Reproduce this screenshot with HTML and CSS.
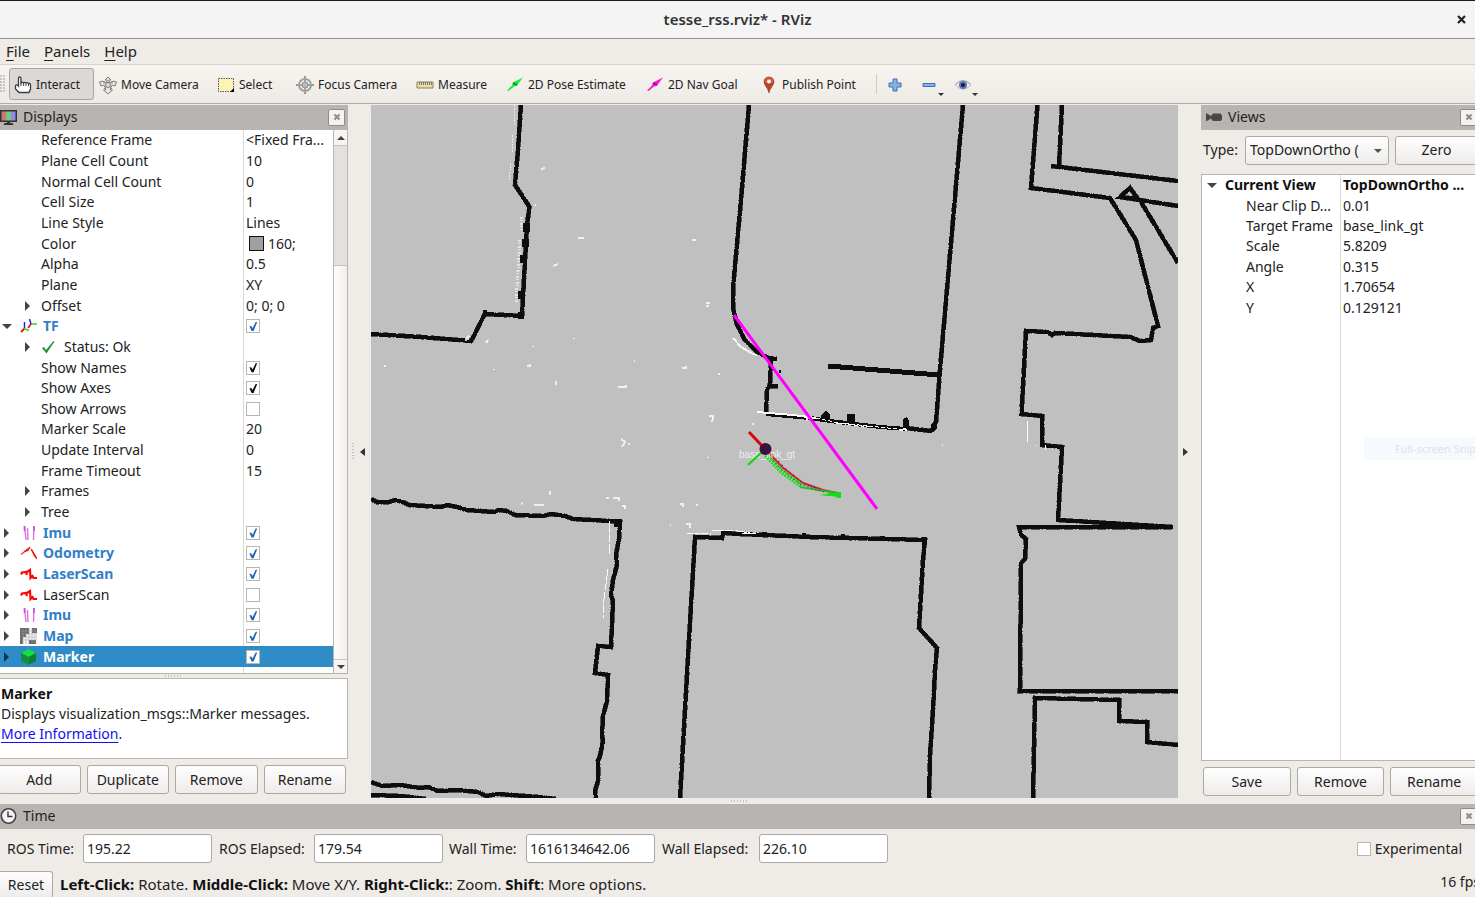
FILE: index.html
```html
<!DOCTYPE html>
<html lang="en">
<head>
<meta charset="utf-8">
<title>tesse_rss.rviz* - RViz</title>
<link rel="stylesheet" href="styles.css">
</head>
<body>
<svg class="defs" aria-hidden="true">
  <symbol id="i-imu" viewBox="0 0 17 16"><path d="M4.500 1l1.500 14M7.500 3l.5 12M14 1l-.5 14" stroke="#e070e0" stroke-width="1.400" fill="none"/><path d="M4.500 1v5M14 1v5" stroke="#c850d8" stroke-width="1.600"/></symbol>
  <symbol id="i-odom" viewBox="0 0 17 16"><path d="M1 9.500l9-7M11 4l6 10" stroke="#f04020" stroke-width="1.500" fill="none"/><path d="M4 6.500l6-4.500-2 4zM12 5l2 6 3 3z" fill="#e82010" stroke="#e82010" stroke-width=".6"/></symbol>
  <symbol id="i-laser" viewBox="0 0 17 16"><path d="M1 8.500l1-2 4-.5 1 3M7 6l3-2 .5 8 2-2 1 2h3.500" stroke="#f80808" stroke-width="2.200" fill="none"/></symbol>
  <symbol id="i-close" viewBox="0 0 8 8"><path d="M1.500 1.500l5 5M6.500 1.500l-5 5" stroke="#8f8f8f" stroke-width="2.200"/></symbol>
</svg>

<header class="titlebar">
  <h1>tesse_rss.rviz* - RViz</h1>
  <button class="win-close" aria-label="Close window"><svg width="9" height="9" viewBox="0 0 9 9"><path d="M1 1l7 7M8 1l-7 7" stroke="#222" stroke-width="2.200"/></svg></button>
</header>

<div class="shell">
<nav class="menubar">
  <button><u>F</u>ile</button><button><u>P</u>anels</button><button><u>H</u>elp</button>
</nav>

<div class="toolbar" role="toolbar">
  <span class="grip"></span>
  <button class="tool active"><svg width="18" height="18" viewBox="0 0 18 18"><path d="M4.500 10V2.500Q4.500 1 5.700 1T7 2.500V7Q8.500 5.500 9.500 7 11 5.500 12 7.200 14 6 14.500 7.500 16.500 7 16.500 9v4l-1.500 3.500H5L1.500 13V9.500Q3 8 4.500 10z" fill="#fff" stroke="#3c3c3c" stroke-width="1.300"/><path d="M7 7v3M9.600 7v3M12 7.500V10M14.500 8v2" stroke="#444"/></svg><span>Interact</span></button>
  <button class="tool"><svg width="18" height="18" viewBox="0 0 18 18"><path d="M9 1l3 3h-2v2l3 1 1-2 3.500 1-1.500 4-2.500-1-2 3v2h2l-4.500 4-4.500-4h2v-2l-2-3-2.500 1L.5 6 4 5l1 2 3-1V4H6z" fill="#e4e4e2" stroke="#808080"/><path d="M5 5l8 8M13 5l-8 8" stroke="#909090"/><circle cx="9" cy="9" r="2.500" fill="#ddd" stroke="#777"/></svg><span>Move Camera</span></button>
  <button class="tool"><svg width="18" height="18" viewBox="0 0 18 18"><path d="M1.500 2.500h15v13h-15z" fill="#fdf3b4" stroke="#555" stroke-dasharray="1.500 1"/><path d="M17 12v4h-4z" fill="#000"/></svg><span>Select</span></button>
  <button class="tool"><svg width="18" height="18" viewBox="0 0 18 18"><circle cx="9" cy="9" r="6" fill="none" stroke="#a0a0a0" stroke-width="2"/><circle cx="9" cy="9" r="3" fill="#bbb" stroke="#8c8c8c"/><path d="M9 0v6M9 12v6M0 9h6M12 9h6" stroke="#909090" stroke-width="2"/><path d="M9 1v5M9 12v5M1 9h5M12 9h5" stroke="#ccc" stroke-width=".6"/></svg><span>Focus Camera</span></button>
  <button class="tool"><svg width="18" height="18" viewBox="0 0 18 18"><path d="M1 6h16v6H1z" fill="#eadf9c" stroke="#888060"/><path d="M3.500 6v3M5.500 6v3M7.500 6v3M9.500 6v3M11.500 6v3M13.500 6v3M15.500 6v3" stroke="#777"/></svg><span>Measure</span></button>
  <button class="tool"><svg width="18" height="18" viewBox="0 0 18 18"><path d="M1 14.500l5-5 1-3 10-5-6 8-3 1-5.500 4.500z" fill="#18ee38"/><path d="M7 7l4 2" stroke="#0a9c20" stroke-width="2"/></svg><span>2D Pose Estimate</span></button>
  <button class="tool"><svg width="18" height="18" viewBox="0 0 18 18"><path d="M1 14.500l5-5 1-3 10-5-6 8-3 1-5.500 4.500z" fill="#f51ad2"/><path d="M7 7l4 2" stroke="#b00aa0" stroke-width="2"/></svg><span>2D Nav Goal</span></button>
  <button class="tool"><svg width="18" height="18" viewBox="0 0 18 18"><path d="M9 17C8 12 4 9 4 5.800 4 3 6.200 1 9 1s5 2 5 4.800C14 9 10 12 9 17z" fill="#b84428" stroke="#8c3820" stroke-width=".6"/><path d="M4.500 5Q5 1.500 9 1.500T13.500 5L12 7H6z" fill="#e05840"/><circle cx="9" cy="5.500" r="1.900" fill="#fff"/></svg><span>Publish Point</span></button>
  <span class="sep"></span>
  <button class="tool mini" aria-label="Add tool"><svg width="14" height="14" viewBox="0 0 14 14"><path d="M5 1h4v4h4v4H9v4H5V9H1V5h4z" fill="#86b2e4" stroke="#3f6fae"/></svg></button>
  <button class="tool mini drop" aria-label="Remove tool"><svg width="14" height="14" viewBox="0 0 14 14"><path d="M1 5.500h12v3H1z" fill="#86b2e4" stroke="#3f6fae"/></svg></button>
  <button class="tool mini drop" aria-label="Visibility"><svg width="18" height="14" viewBox="0 0 18 14"><path d="M1 7Q9-1.500 17 7 9 15.500 1 7z" fill="#e9e9ee" stroke="#bcbcc4"/><circle cx="9" cy="7" r="4" fill="#5a74b8"/><circle cx="9" cy="7" r="2" fill="#141c3c"/><path d="M1.500 6Q9-1 16.500 6" stroke="#a4a4ac" fill="none"/></svg></button>
</div>

<main class="work">
  <section class="dock dock-left">
    <header class="dock-head">
      <svg width="18" height="18" viewBox="0 0 18 18"><path d="M0 2h17v12H0z" fill="#333"/><path d="M1.500 3.500H6v9H1.500z" fill="#c87878"/><path d="M6 3.500h5v9H6z" fill="#78c878"/><path d="M11 3.500h4.500v9H11z" fill="#8c8ce8"/><path d="M7 13h3v2h2.500l1 2h-10l1-2H7z" fill="#333"/></svg>
      <h2>Displays</h2>
      <button class="dock-close" aria-label="Close Displays"><svg width="8" height="8"><use href="#i-close"/></svg></button>
    </header>
    <div class="tree-box">
      <table class="tree tree-displays">
        <tbody>
          <tr class="l2"><th scope="row"><span>Reference Frame</span></th><td><span>&lt;Fixed Fra...</span></td></tr>
          <tr class="l2"><th scope="row"><span>Plane Cell Count</span></th><td>10</td></tr>
          <tr class="l2"><th scope="row"><span>Normal Cell Count</span></th><td>0</td></tr>
          <tr class="l2"><th scope="row"><span>Cell Size</span></th><td>1</td></tr>
          <tr class="l2"><th scope="row"><span>Line Style</span></th><td>Lines</td></tr>
          <tr class="l2"><th scope="row"><span>Color</span></th><td><i class="swatch"></i>160;</td></tr>
          <tr class="l2"><th scope="row"><span>Alpha</span></th><td>0.5</td></tr>
          <tr class="l2"><th scope="row"><span>Plane</span></th><td>XY</td></tr>
          <tr class="l2"><th scope="row"><i class="arrow"></i><span>Offset</span></th><td>0; 0; 0</td></tr>
          <tr class="l1 on"><th scope="row"><i class="arrow open"></i><svg width="17" height="16" viewBox="0 0 17 16"><path d="M1 14l3.500-3.500M8 10l3-4" stroke="#f01010" stroke-width="1.800"/><path d="M4 10.500l5 2M11 6h6" stroke="#20e020" stroke-width="1.500"/><path d="M4.500 10V4M11 6L9.500 1" stroke="#2020f0" stroke-width="1.500"/></svg><label for="c1">TF</label></th><td><input type="checkbox" id="c1" checked></td></tr>
          <tr class="l2"><th scope="row"><i class="arrow"></i><svg class="status" width="14" height="14" viewBox="0 0 14 14"><path d="M1 8l2-1 2 3 7.500-9L13.500 1.500 5.500 13.500z" fill="#2c8a30"/></svg><span>Status: Ok</span></th><td></td></tr>
          <tr class="l2"><th scope="row"><label for="c2">Show Names</label></th><td><input type="checkbox" id="c2" checked></td></tr>
          <tr class="l2"><th scope="row"><label for="c3">Show Axes</label></th><td><input type="checkbox" id="c3" checked></td></tr>
          <tr class="l2"><th scope="row"><label for="c4">Show Arrows</label></th><td><input type="checkbox" id="c4"></td></tr>
          <tr class="l2"><th scope="row"><span>Marker Scale</span></th><td>20</td></tr>
          <tr class="l2"><th scope="row"><span>Update Interval</span></th><td>0</td></tr>
          <tr class="l2"><th scope="row"><span>Frame Timeout</span></th><td>15</td></tr>
          <tr class="l2"><th scope="row"><i class="arrow"></i><span>Frames</span></th><td></td></tr>
          <tr class="l2"><th scope="row"><i class="arrow"></i><span>Tree</span></th><td></td></tr>
          <tr class="l1 on"><th scope="row"><i class="arrow"></i><svg width="17" height="16"><use href="#i-imu"/></svg><label for="c5">Imu</label></th><td><input type="checkbox" id="c5" checked></td></tr>
          <tr class="l1 on"><th scope="row"><i class="arrow"></i><svg width="17" height="16"><use href="#i-odom"/></svg><label for="c6">Odometry</label></th><td><input type="checkbox" id="c6" checked></td></tr>
          <tr class="l1 on"><th scope="row"><i class="arrow"></i><svg width="17" height="16"><use href="#i-laser"/></svg><label for="c7">LaserScan</label></th><td><input type="checkbox" id="c7" checked></td></tr>
          <tr class="l1"><th scope="row"><i class="arrow"></i><svg width="17" height="16"><use href="#i-laser"/></svg><label for="c8">LaserScan</label></th><td><input type="checkbox" id="c8"></td></tr>
          <tr class="l1 on"><th scope="row"><i class="arrow"></i><svg width="17" height="16"><use href="#i-imu"/></svg><label for="c9">Imu</label></th><td><input type="checkbox" id="c9" checked></td></tr>
          <tr class="l1 on"><th scope="row"><i class="arrow"></i><svg width="17" height="16" viewBox="0 0 17 16"><path d="M0 0h17v16H0z" fill="#f2f2f2"/><path d="M0 0h9v6H6v3H3v7H0zM12 0h5v5h-5zM9 12h7v4H9z" fill="#666"/><path d="M0 3h17M0 6h17M0 9h17M0 12h17M3 0v16M6 0v16M9 0v16M12 0v16M15 0v16" stroke="#aaa" stroke-width=".5"/></svg><label for="c10">Map</label></th><td><input type="checkbox" id="c10" checked></td></tr>
          <tr class="l1 on selected"><th scope="row"><i class="arrow"></i><svg width="17" height="16" viewBox="0 0 17 16"><path d="M8.500 0L16 4l-7.500 4L1 4z" fill="#10e040"/><path d="M1 4l7.500 4v8L1 12z" fill="#109038"/><path d="M16 4L8.500 8v8l7.500-4z" fill="#108030"/></svg><label for="c11">Marker</label></th><td><input type="checkbox" id="c11" checked></td></tr>
        </tbody>
      </table>
      <div class="scrollbar" aria-hidden="true">
        <span class="sb-btn up"></span><span class="sb-track"></span><span class="sb-thumb"></span><span class="sb-btn down"></span>
      </div>
    </div>
    <div class="split-h dots-h"></div>
    <div class="desc">
      <b>Marker</b>
      <p>Displays visualization_msgs::Marker messages.</p>
      <p><a href="#more">More Information</a>.</p>
    </div>
    <div class="btn-row">
      <button class="btn">Add</button><button class="btn">Duplicate</button><button class="btn">Remove</button><button class="btn">Rename</button>
    </div>
  </section>

  <div class="side-handle"><span class="dots-v"></span><button class="fold" aria-label="Hide left panel"></button></div>

  <div class="viewport">
    <svg class="map" viewBox="371 105 807 693" preserveAspectRatio="xMidYMid slice" role="img" aria-label="Occupancy map">
      <defs>
        <g id="walls">
          <path d="M521 105l-3 45-3 35 14.500 22-2.500 18-5 91-37-2-14 27-50-4-50-3"/>
          <path d="M749 105l-8 95-8 88v20l4 17 8 15 11 11 12 7 9 1M771 359l-1 25-3 6-1 24M769 386h9"/>
          <path d="M963 105l-12 138-11 127-4 52-5 9-25-3M828 366l111 9"/>
          <path d="M1037.500 105l-6.500 83 79 10 26 42 22 86-5 2-2 12-11 1-10-4-75-4-3 2-4-3-22-1-4.500 83 20.500 2v29l20 2-4 73 115 7"/>
          <path d="M1062 105l-3 61M1051 166l127 15M1120 197l10-9 8 11zl58 9M1141 202l37 61"/>
          <path d="M1172 527h-153l2 8 5 4-1 20-4 4-1 128h158M1033 798l2-100 84 2v21l28 1v20l10 1 21 2"/>
          <path d="M680 798l8-140 7-121 27 1 1-5 17 1 70 3 115 3-2 20-4 68 18 20-2 22-2 40-3 45-1 43"/>
          <path d="M371 499l6 3h12l6-2 8 2 6 3 32 2 6-2 10 2 10 3 27 2 5-2 8 1 8 4 28 1 8-2 14 2 8 3 37 2 10 1-1 17-3 16 1 10-4 15-2 15 2 6-2 46-13-1-3 27 13 2-1 26-4 15-1 20 1 5-3 15-2 5v20l-3 10 1 8"/>
          <path d="M371 782l11 4 18-1 20 3 8-1 10 4 20-1 20 2 8 4 12-2 40 3 18 2M371 795l30 1 25 3"/>
        </g>
      </defs>
      <path d="M371 105h807v693H371z" fill="#c0c0c0"/>
      <use href="#walls" class="wall-halo"/>
      <use href="#walls" class="wall"/>
      <path class="wall-thin" d="M766 414l44 4 20 3 50 6 26 2"/>
      <path class="wall-thick" d="M828 366l111 9"/>
      <path class="wall-fill" d="M523 223h7v9h-7zM522 239h7v8h-7zM520 255h7v8h-7zM518 291h7v8h-7zM518 312h6v7h-6zM483 310h4v6h-4zM821 415l5-4 4 4v5h-9zM847 414h8v9h-8zM903 419l4-2 2 4v8h-6zM931 424l6-5v9l-4 4zM779 370h2v3h-2zM762 532h5v3h-5zM802 533h4v3h-4zM841 534h4v4h-4zM880 536h5v5h-5zM922 537h5v8h-5zM614 519h8v8h-8z"/>
      <g class="scan">
        <path d="M515 105l-1 20M513 135l-1 18M511 163l-2 18" stroke-dasharray="2 1" opacity=".7"/>
        <path d="M522 217l-1 13M520 240l-4 62" stroke-width="3" stroke-dasharray="2 1 1 2" opacity=".6"/>
        <path d="M733 338l8 9 12 7 4 1" stroke-width="2" opacity=".9"/>
        <path d="M757 412l36 3 23 3M806 420l4-3M900 430l6-1M904 429l3 1" stroke-width="2"/>
        <path d="M816 418l23 5 30 3 37 4M836 423l34 4" stroke-dasharray="4 2"/>
        <path d="M687 533l24 1M712 530h20l24 4-14-1M610 521l-1 34M608 569l-4 30-1 19" stroke-dasharray="12 1 8 2"/>
        <path d="M1028 421l-1 22M1045 445v5M1036 445v1"/>
        <path d="M541 169l4-1M535 205l1 1M578 238h6M692 240h4M553 266l5-2M706 303h4M706 306h3M574 338v1M533 346v1M486 343l2-3M469 339l-4 1M465 340l4-4M384 366h2M494 369v1M527 366h3v-2M556 381v4M618 387h8v-2M682 368h4v-2M718 374h2M634 361h1M709 416h4v4M711 421h2M621 439l4 3-3 5M629 443v2M752 424h2M942 445h1M550 491v4M606 498h3M613 498h6v3M622 506h3v3M680 504h3v3M696 505h2M670 525h1M686 524h4v4M521 504l2-1M534 505h10M708 457v1" stroke-width="2" opacity=".8"/>
      </g>
      <g class="axes">
        <path d="M766 450l16 17 21 16 20 7 18 4" stroke="#e02020" stroke-width="2" fill="none"/>
        <path d="M768 450l14 15 17 16 22 9 18 3" stroke="#2828d0" stroke-width="1" stroke-dasharray="2 3" fill="none"/>
        <path d="M766 455l16 17 20 14" stroke="#20e020" stroke-width="5" stroke-dasharray="2 1" fill="none"/>
        <path d="M800 487l24 4 14 2" stroke="#30b830" stroke-width="2" fill="none"/>
        <path d="M819 495l22-3v5zM828 493h13v5h-3z" fill="#10e010"/>
        <path d="M770 457l10 11 20 16 24 8" stroke="#247024" stroke-width="1" stroke-dasharray="2 2" fill="none"/>
        <text x="739" y="458">base_link_gt</text>
        <path d="M765 449l-16-17" stroke="#d80808" stroke-width="3"/>
        <path d="M763 451l-15 14" stroke="#08d808" stroke-width="2"/>
        <circle cx="765.500" cy="449" r="6" fill="#3c1040"/>
        <path d="M734 315L877 509" stroke="#ff00ff" stroke-width="3"/>
      </g>
    </svg>
  </div>

  <div class="side-handle right"><button class="fold" aria-label="Hide right panel"></button></div>

  <section class="dock dock-right">
    <header class="dock-head">
      <svg width="18" height="18" viewBox="0 0 18 18"><path d="M1 5l5 3 2-2.500h7.500l1.500 2v4l-1.500 1.500H8L6 10.500l-5 3z" fill="#484848"/></svg>
      <h2>Views</h2>
      <button class="dock-close" aria-label="Close Views"><svg width="8" height="8"><use href="#i-close"/></svg></button>
    </header>
    <div class="type-row">
      <label for="type">Type:</label>
      <div class="select-wrap"><select id="type"><option>TopDownOrtho (</option></select></div>
      <button class="btn">Zero</button>
    </div>
    <div class="tree-box views-box">
      <table class="tree tree-views">
        <tbody>
          <tr class="root"><th scope="row"><i class="arrow open"></i><span>Current View</span></th><td><span>TopDownOrtho ...</span></td></tr>
          <tr><th scope="row"><span>Near Clip D...</span></th><td>0.01</td></tr>
          <tr><th scope="row"><span>Target Frame</span></th><td>base_link_gt</td></tr>
          <tr><th scope="row"><span>Scale</span></th><td>5.8209</td></tr>
          <tr><th scope="row"><span>Angle</span></th><td>0.315</td></tr>
          <tr><th scope="row"><span>X</span></th><td>1.70654</td></tr>
          <tr><th scope="row"><span>Y</span></th><td>0.129121</td></tr>
        </tbody>
      </table>
      <div class="snip">Full-screen Snip</div>
    </div>
    <div class="btn-row">
      <button class="btn">Save</button><button class="btn">Remove</button><button class="btn">Rename</button>
    </div>
  </section>
</main>

<div class="split-main dots-h"></div>

<section class="time">
  <header class="dock-head">
    <svg width="18" height="18" viewBox="0 0 18 18"><circle cx="8.500" cy="9" r="7.200" fill="#f4f4f4" stroke="#444" stroke-width="1.600"/><path d="M8 4.500v5h4.500" fill="none" stroke="#333" stroke-width="1.400"/></svg>
    <h2>Time</h2>
    <button class="dock-close" aria-label="Close Time"><svg width="8" height="8"><use href="#i-close"/></svg></button>
  </header>
  <div class="time-row">
    <label for="t1">ROS Time:</label><input type="text" id="t1" value="195.22">
    <label for="t2">ROS Elapsed:</label><input type="text" id="t2" value="179.54">
    <label for="t3">Wall Time:</label><input type="text" id="t3" value="1616134642.06">
    <label for="t4">Wall Elapsed:</label><input type="text" id="t4" value="226.10">
    <span class="exp"><input type="checkbox" id="exp"><label for="exp">Experimental</label></span>
  </div>
</section>

<footer class="status-bar">
  <button class="btn">Reset</button>
  <p><b>Left-Click:</b> Rotate. <b>Middle-Click:</b> Move X/Y. <b>Right-Click:</b>: Zoom. <b>Shift</b>: More options.</p>
  <span class="fps">16 fps</span>
</footer>
</div>
</body>
</html>
```
FILE: styles.css
```css
* { box-sizing: border-box; }
html, body { height: 100%; }
body {
  margin: 0;
  overflow: hidden;
  display: flex;
  flex-direction: column;
  background: #efebe7;
  color: #222;
  font: 14px/20px "Noto Sans", "Open Sans", sans-serif;
}
button, input, select { font: inherit; color: inherit; margin: 0; }
button { border: 0; background: none; padding: 0; }
h1, h2, p { margin: 0; font-size: inherit; }
.defs { position: absolute; width: 0; height: 0; }

.titlebar {
  position: relative;
  flex: none;
  height: 39px;
  display: flex;
  align-items: center;
  justify-content: center;
  padding-bottom: 2px;
  background: #f4f4f4;
  border-top: 1px solid #1c1a1e;
  border-bottom: 1px solid #92908c;
}
.titlebar h1 { font-size: 15px; font-weight: 600; color: #333; }
.win-close { position: absolute; right: 9px; top: 14px; line-height: 0; }

/* The shell runs slightly past the right edge of the window. */
.shell { flex: 1; min-height: 0; width: calc(100% + 5px); display: flex; flex-direction: column; }

.menubar {
  flex: none;
  display: flex;
  gap: 14px;
  height: 26px;
  padding: 0 6px 2px;
  align-items: center;
  border-bottom: 1px solid #d6d2ce;
  font-size: 15px;
}
.menubar u { text-underline-offset: 3px; }

.toolbar {
  flex: none;
  height: 39px;
  display: grid;
  grid-template-columns: 9px 86px 118px 79px 120px 90px 140px 114px 120px 8px 34px 32px 34px;
  align-items: center;
  background: linear-gradient(#f7f4f0, #eeeae6);
  border-bottom: 1px solid #aeaaa6;
  font-size: 12px;
}
.tool { display: flex; align-items: center; gap: 4px; height: 32px; padding: 1px 4px 0; white-space: nowrap; }
.tool.active { width: 85px; border: 1px solid #a8a5a2; border-radius: 3px; background: #dcd8d5; }
.grip { width: 5px; height: 18px; background: radial-gradient(circle at 1px 1px, #c8c4c0 1px, transparent 1px) 0 0 / 3px 3px; }
.sep { width: 1px; height: 20px; background: #cfccc8; }
.tool.mini { position: relative; }
.drop::after {
  content: "";
  position: absolute;
  right: 6px;
  bottom: 4px;
  border: 3px solid transparent;
  border-top-color: #333;
  border-bottom: 0;
}

.work { flex: 1; min-height: 0; display: flex; padding-top: 1px; }
.dock { flex: none; display: flex; flex-direction: column; min-height: 0; }
.dock-left { width: 348px; }
.dock-right { width: 279px; }
.dock-head {
  flex: none;
  display: flex;
  align-items: center;
  gap: 5px;
  height: 25px;
  padding: 0 3px 1px 0;
  background: #b8b4b1;
}
.dock-right .dock-head { padding-left: 4px; }
.dock-head h2 { flex: 1; font-weight: 400; }
.dock-close {
  display: flex;
  align-items: center;
  justify-content: center;
  width: 17px;
  height: 17px;
  background: #f4f3f2;
  border: 1px solid #8e8b88;
  border-radius: 2px;
}

.tree-box { flex: 1; min-height: 0; display: flex; background: #fff; border-bottom: 1px solid #b4b0ad; overflow: hidden; }
.tree { display: block; flex: 1; min-width: 0; }
.tree tbody { display: grid; }
.tree tr { display: grid; grid-template-columns: subgrid; grid-column: 1 / -1; align-items: center; }
.tree th, .tree td { display: flex; align-items: center; padding: 0; height: 100%; font-weight: 400; white-space: nowrap; }
.tree th { position: relative; border-right: 1px solid #d8d8d8; }
.tree-displays { background: linear-gradient(#d8d8d8, #d8d8d8) 243px 0 / 1px 100% no-repeat; }
.tree-displays tbody { height: calc(100% - 6px); grid-template-columns: 244px 1fr; grid-template-rows: repeat(26, 1fr); }
.tree td { padding-left: 2px; overflow: hidden; }
.l2 th { padding-left: 41px; }
.l1 th { padding-left: 20px; }
.l1 th svg { margin-right: 6px; }
.status { margin-right: 9px; }
.on th { font-weight: 700; color: #3080c8; }
.selected { background: #308cc6; }
.selected th { color: #fff; border-color: #308cc6; }
.arrow {
  position: absolute;
  left: 4px;
  border: 5px solid transparent;
  border-left-color: #444;
  border-right: 0;
}
.l2 .arrow { left: 25px; }
.arrow.open { left: 2px; border: 5px solid transparent; border-top-color: #444; border-bottom: 0; }
.selected .arrow { border-left-color: #12354c; }
.swatch { width: 15px; height: 15px; margin: 0 4px 0 3px; background: #a0a0a4; border: 1px solid #111; }

input[type="checkbox"] {
  appearance: none;
  display: block;
  width: 14px;
  height: 14px;
  background: #fff;
  border: 1px solid #b8b5b2;
}
input[type="checkbox"]:checked::before {
  content: "";
  display: block;
  width: 12px;
  height: 12px;
  background: #111;
  clip-path: polygon(20% 50%, 35% 48%, 46% 66%, 72% 15%, 85% 15%, 55% 90%, 38% 90%);
}
.on input[type="checkbox"]:checked::before { background: #2468b0; }

.scrollbar { flex: none; width: 15px; display: grid; grid-template-rows: 15px 121px 1fr 14px; border-left: 1px solid #b8b5b2; border-right: 1px solid #b8b5b2; }
.sb-btn { display: flex; align-items: center; justify-content: center; background: #f6f5f4; }
.sb-btn::before { content: ""; border: 4px solid transparent; }
.sb-btn.up::before { border-bottom-color: #444; border-top: 0; }
.sb-btn.down::before { border-top-color: #444; border-bottom: 0; }
.sb-btn.down { border-top: 1px solid #c8c5c2; }
.sb-track { background: #e2e1de; border-top: 1px solid #c4c1be; border-bottom: 1px solid #c4c1be; }
.sb-thumb { background: linear-gradient(90deg, #fdfdfd, #f0efee); }

.split-h { flex: none; height: 4px; }
.dots-h { display: flex; align-items: center; justify-content: center; }
.dots-h::before { content: ""; width: 18px; height: 2px; background: repeating-linear-gradient(90deg, #c4c0bc 0 1px, transparent 1px 3px); }
.desc { flex: none; height: 81px; padding: 5px 1px; background: #fff; border: 1px solid #b8b5b2; border-left: 0; white-space: nowrap; }
.desc b { display: block; color: #111; }
.desc a { color: #1010ee; text-underline-offset: 3px; }

.btn {
  height: 29px;
  background: linear-gradient(#fefefe, #eeeceb);
  border: 1px solid #aca8a4;
  border-radius: 3px;
}
.btn-row { flex: none; display: grid; grid-auto-flow: column; grid-auto-columns: 1fr; gap: 6px; }
.dock-left .btn-row { padding: 6px 2px 4px 0; margin-left: -2px; }
.dock-right .btn-row { padding: 6px 2px 2px 2px; }

.side-handle { flex: none; width: 23px; display: flex; align-items: center; justify-content: flex-end; gap: 6px; padding-right: 6px; }
.side-handle.right { justify-content: flex-start; padding: 0 0 0 5px; }
.fold { border: 4px solid transparent; border-right: 5px solid #333; border-left: 0; }
.right .fold { border-right: 0; border-left: 5px solid #333; }
.dots-v { width: 2px; height: 18px; background: repeating-linear-gradient(#c4c0bc 0 1px, transparent 1px 3px); }

.viewport { flex: 1; min-width: 0; min-height: 0; background: #c0c0c0; }
.map { display: block; width: 100%; height: 100%; }
.wall, .wall-halo, .wall-thin, .wall-thick, .scan { fill: none; shape-rendering: crispEdges; }
.wall { stroke: #0d0d0d; stroke-width: 4px; }
.wall-halo { stroke: #555; stroke-width: 5px; stroke-dasharray: 9 2 1 1 14 3 1 2; }
.wall-thin { stroke: #0d0d0d; stroke-width: 4px; }
.wall-thick { stroke: #0d0d0d; stroke-width: 5px; }
.wall-fill { fill: #0d0d0d; shape-rendering: crispEdges; }
.scan { stroke: #fbfbfb; stroke-width: 1px; }
.axes text { font: 10px "Liberation Sans", sans-serif; fill: #eee; }

.type-row { flex: none; display: flex; align-items: center; height: 44px; padding: 0 2px 4px 2px; }
.type-row label { width: 42px; }
.type-row .btn { flex: 1; }
.select-wrap { position: relative; width: 144px; margin-right: 6px; }
.select-wrap::after { content: ""; position: absolute; right: 7px; top: 13px; border: 4px solid transparent; border-top-color: #555; border-bottom: 0; }
select {
  appearance: none;
  width: 100%;
  height: 29px;
  padding: 0 4px;
  background: linear-gradient(#fefefe, #eeeceb);
  border: 1px solid #aca8a4;
  border-radius: 3px;
}
.views-box { position: relative; border: 1px solid #b8b5b2; border-right: 0; }
.tree-views { background: linear-gradient(#d8d8d8, #d8d8d8) 138px 0 / 1px 100% no-repeat; }
.tree-views tbody { grid-template-columns: 139px 1fr; grid-template-rows: repeat(7, 1fr); height: 143px; }
.tree-views th { padding-left: 44px; }
.tree-views .root th { padding-left: 23px; }
.tree-views .root th, .tree-views .root td { font-weight: 700; color: #111; }
.tree-views .arrow.open { left: 5px; }
.snip { position: absolute; left: 162px; right: 0; top: 263px; height: 22px; padding-left: 31px; background: #f6f9fd; color: #dfe4ec; font-size: 11px; line-height: 22px; white-space: nowrap; }

.split-main { flex: none; height: 6px; }
.time { flex: none; }
.time-row { display: grid; grid-template-columns: 76px 136px 95px 135px 77px 136px 97px 136px 1fr; align-items: center; height: 39px; padding: 0 18px 0 7px; }
.time-row input[type="text"] { width: 129px; height: 29px; padding: 0 3px; background: #fff; border: 1px solid #aca8a4; border-radius: 3px; }
.exp { display: flex; align-items: center; justify-content: flex-end; gap: 4px; }
.status-bar { flex: none; display: flex; align-items: center; height: 29px; gap: 7px; white-space: nowrap; font-size: 15px; }
.status-bar .btn { align-self: flex-end; width: 53px; height: 26px; border-left: 0; border-bottom: 0; border-radius: 0 3px 0 0; font-size: 14px; }
.status-bar p { padding-top: 3px; }
.status-bar b { color: #111; }
.fps { margin-left: auto; padding-bottom: 2px; font-size: 14px; }
```
